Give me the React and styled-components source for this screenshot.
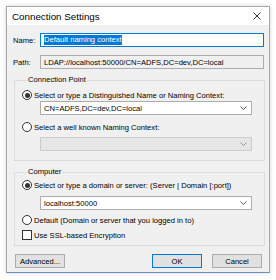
import React from 'react'
import styled, { createGlobalStyle } from 'styled-components'

const GlobalStyle = createGlobalStyle`
  body {
    margin: 0;
    background: #ffffff;
    font-family: "Liberation Sans", Arial, sans-serif;
  }
`;

const Page = styled.div`
  width: 276px;
  height: 280px;
  padding: 6px 6px 0 6px;
  box-sizing: border-box;
`;

const Window = styled.div`
  width: 264px;
  height: 267px;
  box-sizing: border-box;
  border: 1px solid #a9a9a9;
  border-bottom: 1px solid #6f8fc4;
  background: #f0f0f0;
  box-shadow: 0 0 4px rgba(0, 0, 0, 0.18);
  display: flex;
  flex-direction: column;
`;

const TitleBar = styled.div`
  height: 18px;
  background: #ffffff;
  display: flex;
  align-items: center;
  justify-content: space-between;
  padding: 0 8px 0 5px;
  font-size: 9.8px;
  color: #000;
`;

const Body = styled.div`
  flex: 1;
  padding: 8px 5px 0 6px;
  display: flex;
  flex-direction: column;
  font-size: 7.6px;
  color: #000;
`;

const FieldRow = styled.div`
  display: flex;
  align-items: center;
  height: 14px;
  margin-bottom: ${p => p.gap || 0}px;
`;

const Label = styled.span`
  width: 27px;
`;

const TextBox = styled.div`
  flex: 1;
  height: 14px;
  box-sizing: border-box;
  border: 1px solid ${p => (p.focused ? '#0078d7' : '#adadad')};
  background: ${p => (p.readOnly ? '#f0f0f0' : '#ffffff')};
  display: flex;
  align-items: center;
  padding-left: 3px;
  white-space: nowrap;
`;

const Selected = styled.span`
  background: #0078d7;
  color: #fff;
  line-height: 10px;
`;

const Group = styled.fieldset`
  margin: 0 0 0 1px;
  width: 251px;
  box-sizing: border-box;
  border: 1px solid #dcdcdc;
  padding: 0 0 ${p => p.pb}px 7px;
  margin-top: ${p => p.mt}px;
`;

const Legend = styled.legend`
  padding: 0 1px;
  margin-left: 5px;
  font-size: 7.6px;
  line-height: 10px;
`;

const Option = styled.div`
  display: flex;
  align-items: center;
  height: 10px;
  margin-top: ${p => p.mt || 0}px;
  white-space: nowrap;
`;

const Radio = styled.span`
  width: 10px;
  height: 10px;
  box-sizing: border-box;
  border: 1px solid #333;
  border-radius: 50%;
  background: #fff;
  margin-right: 2px;
  display: flex;
  align-items: center;
  justify-content: center;
  &::after {
    content: '';
    width: 5px;
    height: 5px;
    border-radius: 50%;
    background: ${p => (p.checked ? '#333' : 'transparent')};
  }
`;

const Check = styled.span`
  width: 10px;
  height: 10px;
  box-sizing: border-box;
  border: 1px solid #333;
  background: #fff;
  margin-right: 2px;
`;

const Combo = styled.div`
  width: 212px;
  height: 14px;
  box-sizing: border-box;
  margin: ${p => p.mt}px 0 0 18px;
  border: 1px solid ${p => (p.disabled ? '#cccccc' : '#adadad')};
  background: ${p => (p.disabled ? '#e6e6e6' : '#ffffff')};
  display: flex;
  align-items: center;
  justify-content: space-between;
  padding: 0 4px 0 3px;
  white-space: nowrap;
`;

const Chevron = ({ color }) => (
  <svg width="7" height="4" viewBox="0 0 7 4">
    <path d="M0.5 0.5 L3.5 3.5 L6.5 0.5" fill="none" stroke={color} strokeWidth="0.9" />
  </svg>
);

const ButtonRow = styled.div`
  display: flex;
  align-items: center;
  margin-top: 8px;
  padding-left: 2px;
`;

const Button = styled.div`
  width: 50px;
  height: 14px;
  box-sizing: border-box;
  border: 1px solid ${p => (p.primary ? '#0078d7' : '#adadad')};
  background: #e1e1e1;
  display: flex;
  align-items: center;
  justify-content: center;
  margin-left: ${p => p.ml || 0}px;
`;

const App = () => {
  return (
    <Page>
      <GlobalStyle />
      <Window>
        <TitleBar>
          <span>Connection Settings</span>
          <svg width="8" height="8" viewBox="0 0 8 8">
            <path d="M0.5 0.5 L7.5 7.5 M7.5 0.5 L0.5 7.5" stroke="#222" strokeWidth="0.9" />
          </svg>
        </TitleBar>
        <Body>
          <FieldRow gap={8}>
            <Label>Name:</Label>
            <TextBox focused>
              <Selected>Default naming context</Selected>
            </TextBox>
          </FieldRow>
          <FieldRow>
            <Label>Path:</Label>
            <TextBox readOnly>LDAP://localhost:50000/CN=ADFS,DC=dev,DC=local</TextBox>
          </FieldRow>

          <Group mt={6} pb={9}>
            <Legend>Connection Point</Legend>
            <Option mt={5}>
              <Radio checked />Select or type a Distinguished Name or Naming Context:
            </Option>
            <Combo mt={1}>
              CN=ADFS,DC=dev,DC=local
              <Chevron color="#444" />
            </Combo>
            <Option mt={7}>
              <Radio />Select a well known Naming Context:
            </Option>
            <Combo mt={5} disabled>
              <span />
              <Chevron color="#888" />
            </Combo>
          </Group>

          <Group mt={6} pb={5}>
            <Legend>Computer</Legend>
            <Option mt={3}>
              <Radio checked />Select or type a domain or server: (Server | Domain [:port])
            </Option>
            <Combo mt={6}>
              localhost:50000
              <Chevron color="#444" />
            </Combo>
            <Option mt={5}>
              <Radio />Default (Domain or server that you logged in to)
            </Option>
            <Option mt={5}>
              <Check />Use SSL-based Encryption
            </Option>
          </Group>

          <ButtonRow>
            <Button>Advanced...</Button>
            <Button primary ml={87}>OK</Button>
            <Button ml={10}>Cancel</Button>
          </ButtonRow>
        </Body>
      </Window>
    </Page>
  )
}

export default App
